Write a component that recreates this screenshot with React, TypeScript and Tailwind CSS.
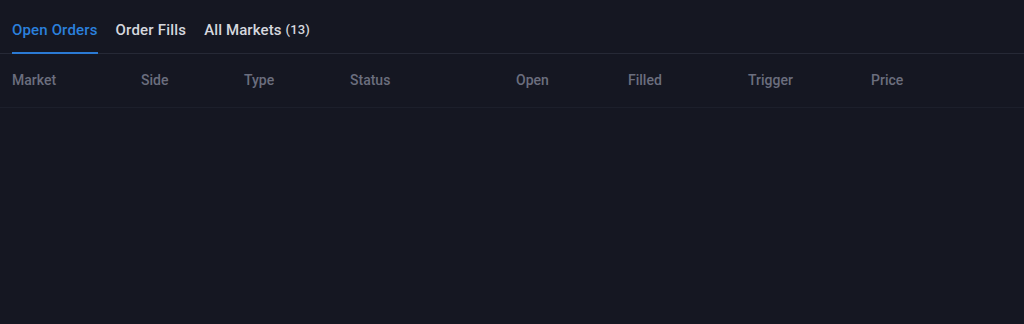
const columns = [
  { label: "Market", w: "w-[129px]" },
  { label: "Side", w: "w-[103px]" },
  { label: "Type", w: "w-[106px]" },
  { label: "Status", w: "w-[166px]" },
  { label: "Open", w: "w-[112px]" },
  { label: "Filled", w: "w-[120px]" },
  { label: "Trigger", w: "w-[123px]" },
  { label: "Price", w: "w-[100px]" },
]

export default function App() {
  return (
    <div className="w-[1024px] h-[324px] bg-[#151722] font-['Roboto',_'Liberation_Sans',_sans-serif] font-medium">
      <div className="flex h-[54px] items-stretch gap-[18px] px-3 border-b border-[#262936]">
        <button className="relative flex items-center pt-[7px] text-[15px] tracking-[0.15px] text-[#2b80dd]">
          Open Orders
          <span className="absolute left-0 right-0 bottom-[-1px] h-[2px] bg-[#2b7ad4]" />
        </button>
        <button className="flex items-center pt-[7px] text-[15px] tracking-[0.2px] text-[#d5d7de]">Order Fills</button>
        <button className="flex items-center pt-[7px] text-[15px] tracking-[0.1px] text-[#d5d7de]">
          All Markets
          <span className="ml-1 text-[13px]">(13)</span>
        </button>
      </div>
      <div className="flex h-[54px] items-center px-3 border-b border-[#1c1f2b]">
        {columns.map((c) => (
          <div key={c.label} className={`${c.w} shrink-0 text-[14px] text-[#6b6e7e]`}>
            {c.label}
          </div>
        ))}
      </div>
    </div>
  )
}
